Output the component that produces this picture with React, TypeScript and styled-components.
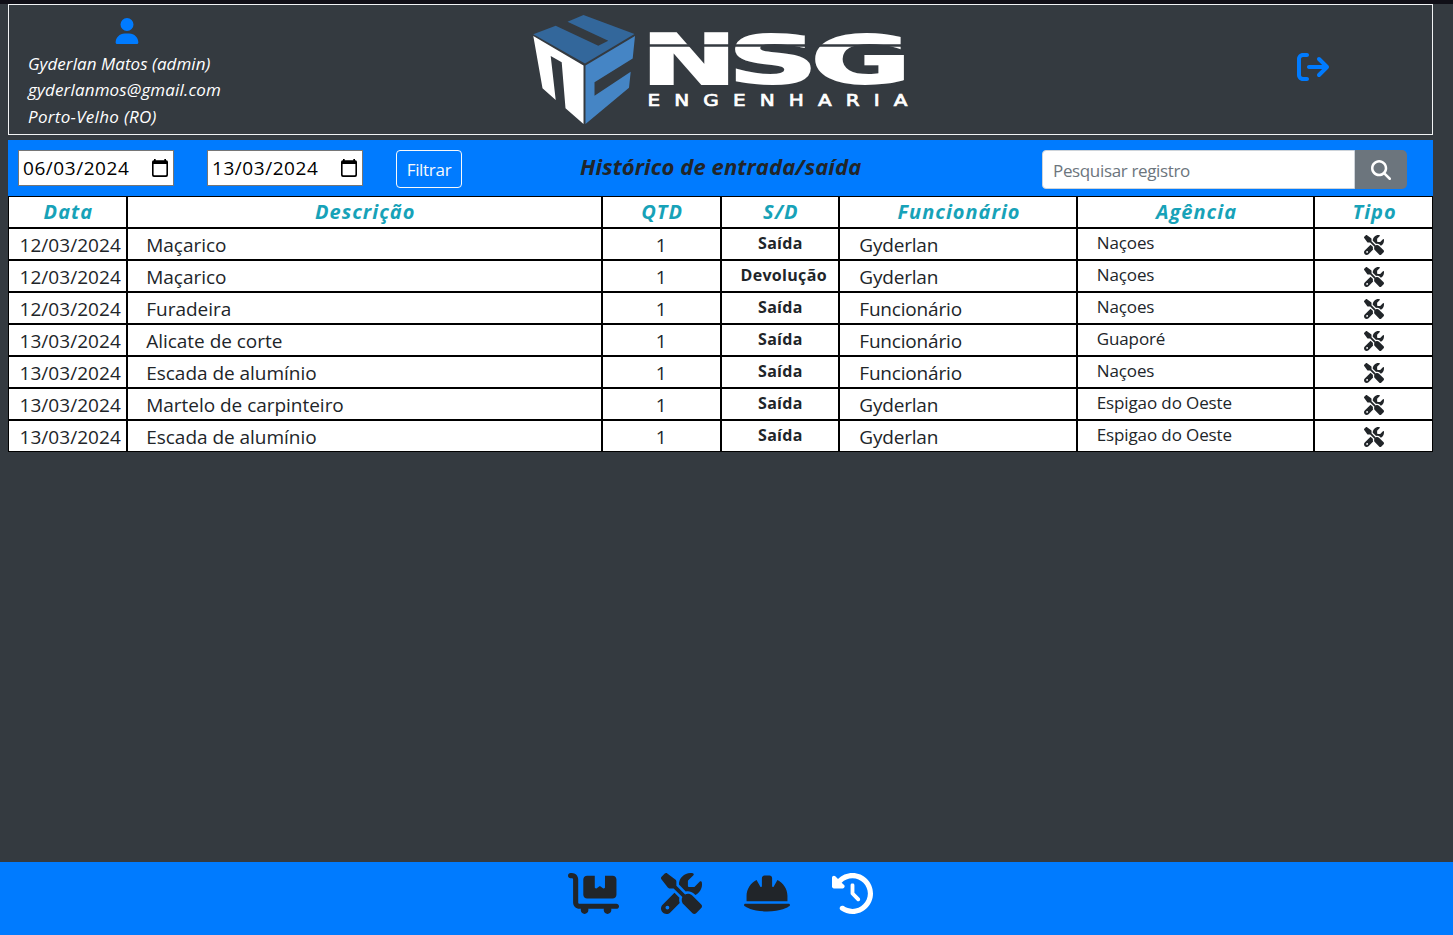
import React from "react";
import styled, { createGlobalStyle } from "styled-components";
import {
  FaUser,
  FaArrowRightFromBracket,
  FaMagnifyingGlass,
  FaScrewdriverWrench,
  FaCartFlatbed,
  FaHelmetSafety,
  FaClockRotateLeft,
} from "react-icons/fa6";

const GlobalStyle = createGlobalStyle`
  *, *::before, *::after { box-sizing: border-box; }
  body {
    margin: 0;
    background: #343a40;
    color: #212529;
    font-family: "Open Sans", "Noto Sans", sans-serif;
    overflow: hidden;
  }
`;

const Page = styled.div`
  height: 935px;
  display: flex;
  flex-direction: column;
  background: #343a40;
`;

const TopStrip = styled.div`
  height: 4px;
  flex: none;
  background: #100f17;
`;

const Main = styled.main`
  flex: 1;
  margin: 0 20px 0 8px;
`;

const Header = styled.header`
  height: 131px;
  border: 1px solid #f1f3f5;
  display: grid;
  grid-template-columns: 237px 1fr 237px;
  color: #fff;
`;

const UserBox = styled.div`
  display: flex;
  flex-direction: column;
  padding: 13px 0 0 19px;
  font-style: italic;
  font-size: 17px;
  line-height: 26.5px;
  white-space: nowrap;
`;

const UserIcon = styled.div`
  display: flex;
  width: 198px;
  height: 32.5px;
  justify-content: center;
  color: #007bff;
  font-size: 26px;
`;

const UserLine = styled.span<{ $track: number }>`
  letter-spacing: ${(p) => p.$track}px;
`;

const LogoBox = styled.div`
  display: flex;
  padding: 5px 0 0 277px;
`;

const Logout = styled.button`
  background: none;
  border: 0;
  padding: 0 2px 5px 0;
  display: flex;
  align-items: center;
  justify-content: center;
  color: #007bff;
  font-size: 32px;
`;

const Toolbar = styled.section`
  height: 56px;
  margin-top: 5px;
  padding: 10px 26px 0 10px;
  background: #007bff;
  display: flex;
  align-items: flex-start;
`;

const DateField = styled.div`
  width: 156px;
  height: 36px;
  margin-right: 33px;
  padding: 0 5px 0 4px;
  border: 1px solid #767676;
  background: #fff;
  color: #000;
  display: flex;
  align-items: center;
  justify-content: space-between;
  font-size: 19px;
  letter-spacing: 0.55px;
`;

const FilterButton = styled.button`
  width: 66px;
  height: 38px;
  padding: 0;
  border: 1px solid #f8f9fa;
  border-radius: 4px;
  background: transparent;
  color: #f8f9fa;
  font: 17px "Open Sans", sans-serif;
  letter-spacing: -0.3px;
`;

const Title = styled.h1`
  flex: 1;
  margin: 0;
  padding-left: 118px;
  font-size: 22px;
  line-height: 32px;
  font-weight: 700;
  font-style: italic;
  letter-spacing: 0.1px;
`;

const Search = styled.div`
  display: flex;
  width: 365px;
  height: 39px;
`;

const SearchInput = styled.input`
  width: 313px;
  padding: 2px 10px 0;
  border: 1px solid #ced4da;
  border-radius: 4px 0 0 4px;
  background: #fff;
  font: 17px "Open Sans", sans-serif;
  letter-spacing: -0.35px;
  &::placeholder { color: #6c757d; opacity: 1; }
`;

const SearchButton = styled.button`
  width: 52px;
  border: 0;
  border-radius: 0 5px 5px 0;
  background: #6c757d;
  color: #fff;
  font-size: 20px;
  display: flex;
  align-items: center;
  justify-content: center;
`;

const Row = styled.div`
  display: grid;
  grid-template-columns: 1fr 4fr 1fr 1fr 2fr 2fr 1fr;
  grid-template-rows: 32px;
  height: 32px;
  background: #fff;
`;

const Cell = styled.div<{ $center?: boolean; $pad?: number; $track?: number }>`
  min-width: 0;
  height: 32px;
  border: 1px solid #000;
  padding-left: ${(p) => p.$pad ?? 0}px;
  text-align: ${(p) => (p.$center ? "center" : "left")};
  font-size: 19px;
  line-height: 32px;
  letter-spacing: ${(p) => p.$track ?? 0}px;
  white-space: nowrap;
`;

const HeadCell = styled(Cell)`
  color: #17a2b8;
  font-size: 20px;
  line-height: 29px;
  font-weight: 700;
  font-style: italic;
`;

const StatusCell = styled(Cell)`
  font-size: 16px;
  line-height: 28px;
  font-weight: 700;
`;

const AgencyCell = styled(Cell)`
  font-size: 17px;
  line-height: 28px;
`;

const IconCell = styled(Cell)`
  display: flex;
  justify-content: center;
  align-items: center;
  padding-top: 1px;
  font-size: 20px;
`;

const Footer = styled.nav`
  height: 73px;
  flex: none;
  background: #007bff;
  display: flex;
  justify-content: center;
  padding: 11px 12px 0 0;
  gap: 42px;
`;

const NavItem = styled.a<{ $width: number; $active?: boolean }>`
  display: flex;
  height: 41px;
  color: ${(p) => (p.$active ? "#fff" : "#212529")};
  svg { width: ${(p) => p.$width}px; height: 41px; }
`;

const CalendarIcon = () => (
  <svg width="16" height="18" viewBox="0 0 16 18">
    <path d="M2 0h1.700v1.300h8.600V0H14v1.300h.3A1.700 1.700 0 0 1 16 3v13a1.900 1.900 0 0 1-1.900 1.900H1.900A1.900 1.900 0 0 1 0 16V3a1.700 1.700 0 0 1 1.700-1.700H2zM1.600 5v10.500a.8.8 0 0 0 .8.8h11.200a.8.8 0 0 0 .8-.8V5z" fill="#000" fillRule="evenodd" />
  </svg>
);

const Logo = () => (
  <svg width="390" height="118" viewBox="523 10 390 118">
    <path d="M533.300 34.300 555.700 25.700 598.300 45.700 608.300 40.700 567.500 21.700 583.500 15 634.500 34 585 63.500Z" fill="#33679b" />
    <path d="M533.300 36 583.500 65.500V124L565.500 108.300 561.700 62.300 550.700 56 555.700 100 542.500 88.300Z" fill="#fff" />
    <path d="M585.500 65.500 635 36 632.700 58.500 594.500 82.300V95.700L630.700 71.700 629 87.700 585.500 124Z" fill="#4585c5" />
    <g fill="#fff" stroke="#fff" strokeWidth="2" fontFamily="DejaVu Sans" fontWeight="700">
      <text x="641" y="84" fontSize="69" textLength="96" lengthAdjust="spacingAndGlyphs">N</text>
      <text x="728" y="83" fontSize="66" textLength="90" lengthAdjust="spacingAndGlyphs">S</text>
      <text x="811" y="83" fontSize="66" textLength="100" lengthAdjust="spacingAndGlyphs">G</text>
    </g>
    <path d="M646 45.500H910" stroke="#343a40" strokeWidth="2.500" />
    <text transform="translate(647.500 106) scale(1.250 1)" fill="#fff" stroke="#fff" strokeWidth="0.700" fontFamily="DejaVu Sans" fontSize="16" textLength="208">ENGENHARIA</text>
  </svg>
);

const heads = ["Data", "Descrição", "QTD", "S/D", "Funcionário", "Agência", "Tipo"];

const records = [
  ["12/03/2024", "Maçarico", "Saída", "Gyderlan", "Naçoes"],
  ["12/03/2024", "Maçarico", "Devolução", "Gyderlan", "Naçoes"],
  ["12/03/2024", "Furadeira", "Saída", "Funcionário", "Naçoes"],
  ["13/03/2024", "Alicate de corte", "Saída", "Funcionário", "Guaporé"],
  ["13/03/2024", "Escada de alumínio", "Saída", "Funcionário", "Naçoes"],
  ["13/03/2024", "Martelo de carpinteiro", "Saída", "Gyderlan", "Espigao do Oeste"],
  ["13/03/2024", "Escada de alumínio", "Saída", "Gyderlan", "Espigao do Oeste"],
];

export default function App() {
  return (
    <Page>
      <GlobalStyle />
      <TopStrip />
      <Main>
        <Header>
          <UserBox>
            <UserIcon><FaUser /></UserIcon>
            <UserLine $track={0.05}>Gyderlan Matos (admin)</UserLine>
            <UserLine $track={0.16}>gyderlanmos@gmail.com</UserLine>
            <UserLine $track={0.3}>Porto-Velho (RO)</UserLine>
          </UserBox>
          <LogoBox><Logo /></LogoBox>
          <Logout aria-label="Sair"><FaArrowRightFromBracket /></Logout>
        </Header>
        <Toolbar>
          <DateField>06/03/2024<CalendarIcon /></DateField>
          <DateField>13/03/2024<CalendarIcon /></DateField>
          <FilterButton>Filtrar</FilterButton>
          <Title>Histórico de entrada/saída</Title>
          <Search>
            <SearchInput placeholder="Pesquisar registro" />
            <SearchButton aria-label="Pesquisar"><FaMagnifyingGlass /></SearchButton>
          </Search>
        </Toolbar>
        <Row>
          {heads.map((h) => <HeadCell key={h} $center $pad={2} $track={1}>{h}</HeadCell>)}
        </Row>
        {records.map(([date, item, status, person, agency], i) => (
          <Row key={i}>
            <Cell $pad={10.5} $track={0.05}>{date}</Cell>
            <Cell $pad={18.5} $track={-0.03}>{item}</Cell>
            <Cell $center>1</Cell>
            <StatusCell $center={status === "Saída"} $pad={status === "Saída" ? 1 : 19} $track={0.32}>{status}</StatusCell>
            <Cell $pad={19} $track={-0.18}>{person}</Cell>
            <AgencyCell $pad={19} $track={-0.12}>{agency}</AgencyCell>
            <IconCell><FaScrewdriverWrench /></IconCell>
          </Row>
        ))}
      </Main>
      <Footer>
        <NavItem $width={51}><FaCartFlatbed /></NavItem>
        <NavItem $width={41}><FaScrewdriverWrench /></NavItem>
        <NavItem $width={46}><FaHelmetSafety /></NavItem>
        <NavItem $width={41} $active><FaClockRotateLeft /></NavItem>
      </Footer>
    </Page>
  );
}
